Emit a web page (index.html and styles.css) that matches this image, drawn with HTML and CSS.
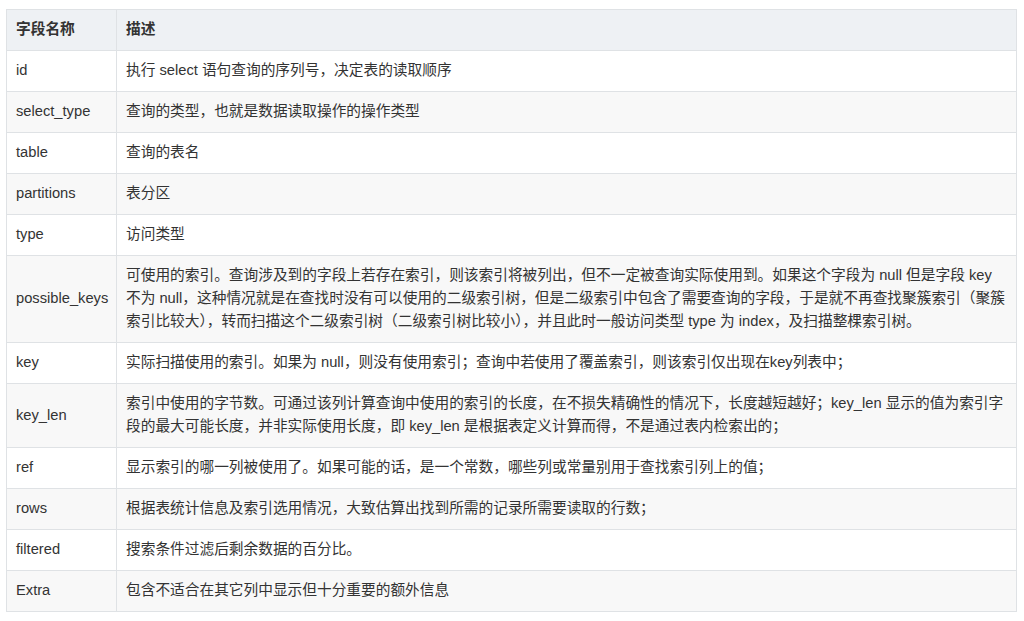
FILE: index.html
```html
<!DOCTYPE html>
<html lang="zh">
<head>
<meta charset="utf-8">
<link rel="stylesheet" href="styles.css">
</head>
<body>
<div class="wrap">
<table class="fields">
<thead>
<tr><th class="c1">字段名称</th><th class="desc">描述</th></tr>
</thead>
<tbody>
<tr><td>id</td><td class="desc">执行 select 语句查询的序列号，决定表的读取顺序</td></tr>
<tr><td>select_type</td><td class="desc">查询的类型，也就是数据读取操作的操作类型</td></tr>
<tr><td>table</td><td class="desc">查询的表名</td></tr>
<tr><td>partitions</td><td class="desc">表分区</td></tr>
<tr><td>type</td><td class="desc">访问类型</td></tr>
<tr><td>possible_keys</td><td class="desc">可使用的索引。查询涉及到的字段上若存在索引，则该索引将被列出，但不一定被查询实际使用到。如果这个字段为 null 但是字段 key 不为 null，这种情况就是在查找时没有可以使用的二级索引树，但是二级索引中包含了需要查询的字段，于是就不再查找聚簇索引（聚簇索引比较大），转而扫描这个二级索引树（二级索引树比较小），并且此时一般访问类型 type 为 index，及扫描整棵索引树。</td></tr>
<tr><td>key</td><td class="desc">实际扫描使用的索引。如果为 null，则没有使用索引；查询中若使用了覆盖索引，则该索引仅出现在key列表中；</td></tr>
<tr><td>key_len</td><td class="desc">索引中使用的字节数。可通过该列计算查询中使用的索引的长度，在不损失精确性的情况下，长度越短越好；key_len 显示的值为索引字段的最大可能长度，并非实际使用长度，即 key_len 是根据表定义计算而得，不是通过表内检索出的；</td></tr>
<tr><td>ref</td><td class="desc">显示索引的哪一列被使用了。如果可能的话，是一个常数，哪些列或常量别用于查找索引列上的值；</td></tr>
<tr><td>rows</td><td class="desc">根据表统计信息及索引选用情况，大致估算出找到所需的记录所需要读取的行数；</td></tr>
<tr><td>filtered</td><td class="desc">搜索条件过滤后剩余数据的百分比。</td></tr>
<tr><td>Extra</td><td class="desc">包含不适合在其它列中显示但十分重要的额外信息</td></tr>
</tbody>
</table>
</div>
</body>
</html>
```
FILE: styles.css
```css
html, body {
  margin: 0;
  padding: 0;
  background: #ffffff;
}
.wrap {
  padding: 9px 0 0 6px;
}
.fields {
  width: 1011px;
  border-collapse: collapse;
  font-family: "Liberation Sans", "Noto Sans CJK SC", sans-serif;
  font-size: 14.7px;
  line-height: 23px;
  color: #333333;
  table-layout: fixed;
}
.fields th,
.fields td {
  border: 1px solid #dfe2e5;
  padding: 8px 9px 9px 9px;
  text-align: left;
  vertical-align: middle;
}
.fields th {
  background: #eef1f4;
  font-weight: 600;
}
.fields .c1 {
  width: 91px;
}
.fields tbody tr:nth-child(even) td {
  background: #f8f8f8;
}
```
